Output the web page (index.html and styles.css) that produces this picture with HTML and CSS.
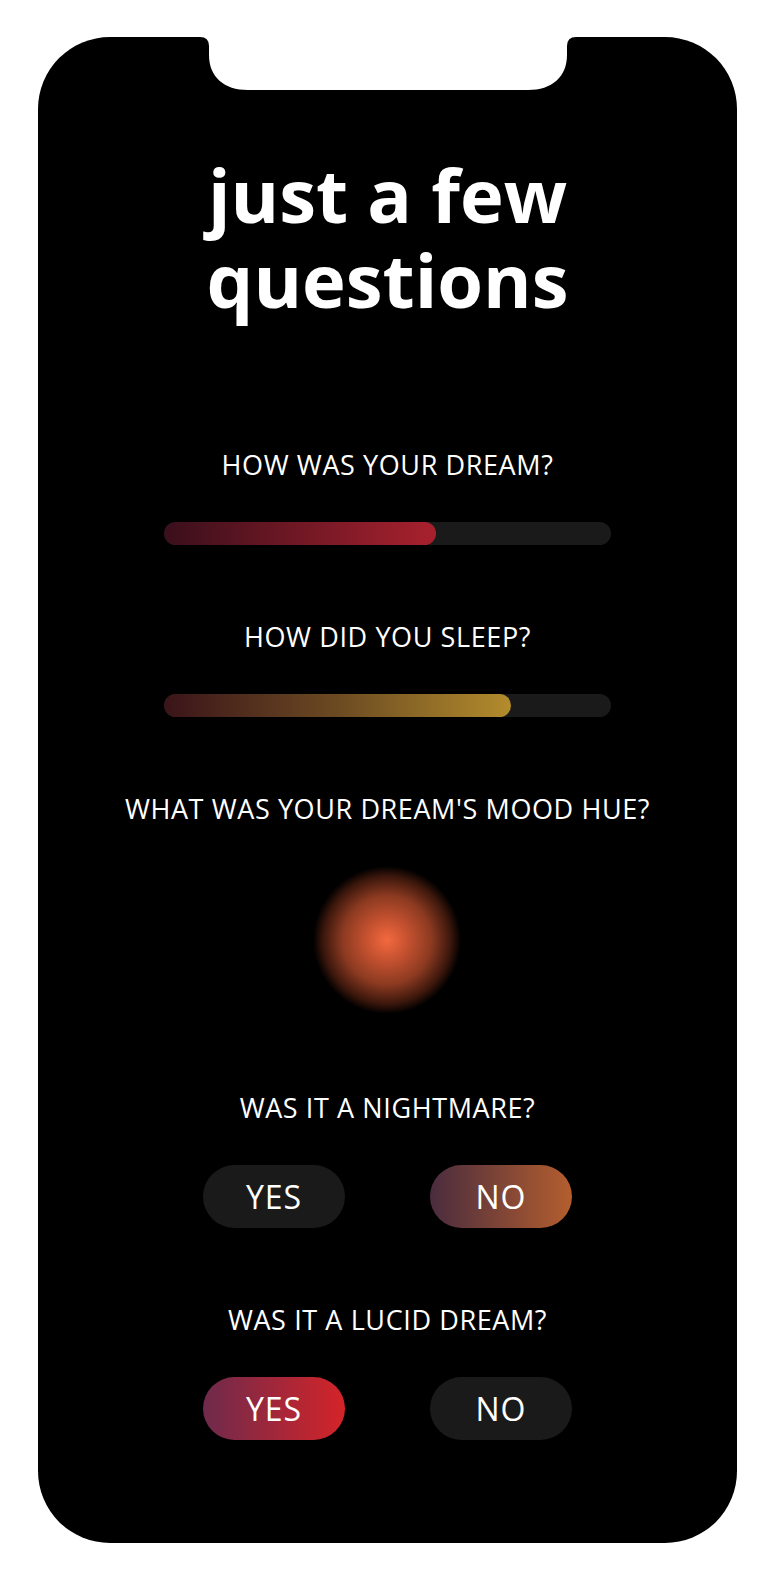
FILE: index.html
```html
<!DOCTYPE html>
<html lang="en">
<head>
    <meta charset="UTF-8">
    <meta name="viewport" content="width=device-width, initial-scale=1.0">
    <title>Dream Journal</title>
    <link rel="stylesheet" href="styles.css">
</head>
<body>
    <div class="phone">
        <!-- the notch cut out of the top edge -->
        <svg class="notch" width="376" height="55" viewBox="0 -1 376 55">
            <path d="M0,-1 L0,0 Q9,0 9,9 L9,18 C9,40 24,53 48,53 L328,53 C352,53 367,40 367,18 L367,9 Q367,0 376,0 L376,-1 Z" fill="#fff"/>
        </svg>

        <h1 class="title">
            <span class="title-line">just a few</span>
            <span class="title-line">questions</span>
        </h1>

        <div class="question">
            <p class="question-label">HOW WAS YOUR DREAM?</p>
            <div class="slider">
                <div class="slider-fill fill-dream" style="width: 60.8%"></div>
            </div>
        </div>

        <div class="question">
            <p class="question-label">HOW DID YOU SLEEP?</p>
            <div class="slider">
                <div class="slider-fill fill-sleep" style="width: 77.6%"></div>
            </div>
        </div>

        <div class="question">
            <p class="question-label">WHAT WAS YOUR DREAM'S MOOD HUE?</p>
            <div class="mood-orb"></div>
        </div>

        <div class="question">
            <p class="question-label">WAS IT A NIGHTMARE?</p>
            <div class="choices">
                <button class="choice">YES</button>
                <button class="choice choice-no-active">NO</button>
            </div>
        </div>

        <div class="question">
            <p class="question-label">WAS IT A LUCID DREAM?</p>
            <div class="choices">
                <button class="choice choice-yes-active">YES</button>
                <button class="choice">NO</button>
            </div>
        </div>
    </div>
</body>
</html>
```

FILE: styles.css
```css
body {
    margin: 0;
    padding: 0;
    background: #fff;
    font-family: 'Open Sans', sans-serif;
    color: white;
}

.phone {
    position: relative;
    box-sizing: border-box;
    width: 699px;
    height: 1506px;
    margin: 37px auto 0;
    padding-top: 115px;
    background: #000;
    border-radius: 72px;
    display: flex;
    flex-direction: column;
    align-items: center;
}

.notch {
    position: absolute;
    top: -1px;
    left: 50%;
    transform: translateX(-50%);
    display: block;
}

.title {
    margin: 0 0 127px;
    font-size: 74px;
    line-height: 85px;
    font-weight: 700;
    text-align: center;
}

.title-line {
    display: block;
    height: 85px;
}

.question {
    display: flex;
    flex-direction: column;
    align-items: center;
}

.question + .question {
    margin-top: 76px;
}

.question-label {
    margin: 0 0 41px;
    font-size: 27px;
    line-height: 32px;
    font-weight: 400;
    letter-spacing: 0.6px;
    text-align: center;
}

.slider {
    width: 447px;
    height: 23px;
    border-radius: 12px;
    background: #1a1a1a;
    overflow: hidden;
}

.slider-fill {
    height: 100%;
    border-radius: 12px;
}

.fill-dream {
    background: linear-gradient(90deg, #3a0f1c, #a8212d);
}

.fill-sleep {
    background: linear-gradient(90deg, #3a1419, #6b4a22 50%, #b38c2c);
}

.mood-orb {
    width: 148px;
    height: 148px;
    margin-bottom: 2px;
    border-radius: 50%;
    background: radial-gradient(circle closest-side, #f3693f 0%, #c2502f 30%, #8c3a21 60%, #3c170c 86%, rgba(0, 0, 0, 0) 100%);
}

.choices {
    display: flex;
    gap: 85px;
}

.choice {
    width: 142px;
    height: 63px;
    padding: 0;
    border: none;
    border-radius: 32px;
    background: #1a1a1a;
    color: white;
    font-family: inherit;
    font-size: 32px;
    font-weight: 500;
    letter-spacing: 1px;
    cursor: pointer;
}

.choice-no-active {
    background: linear-gradient(90deg, #4a2c3e, #b45e2e);
}

.choice-yes-active {
    background: linear-gradient(90deg, #6e2a4c, #d42428);
}
```
